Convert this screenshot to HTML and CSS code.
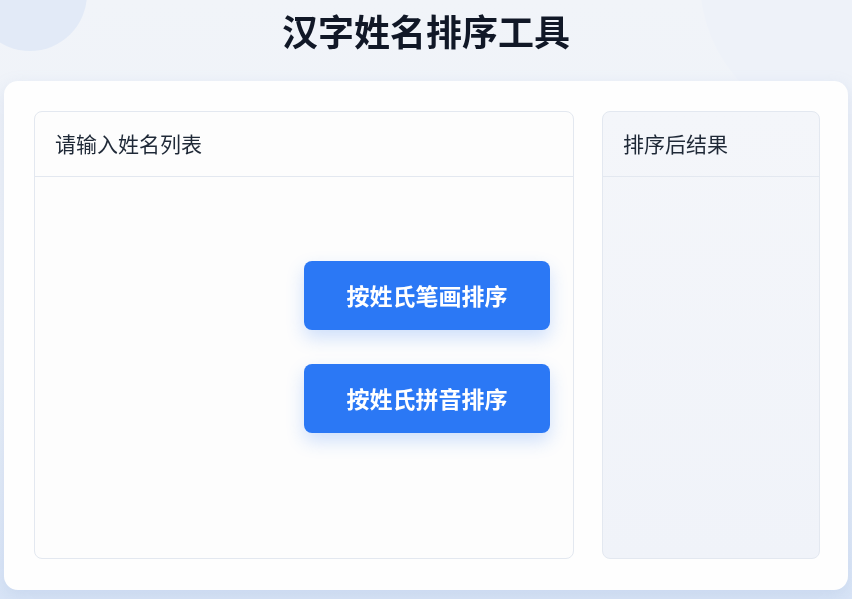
FILE: index.html
```html
<!DOCTYPE html>
<html lang="zh-CN">
<head>
  <meta charset="UTF-8" />
  <meta name="viewport" content="width=device-width, initial-scale=1" />
  <title>汉字姓名排序工具</title>
  <link rel="stylesheet" href="styles.css">
</head>
<body>
  <div class="backdrop">
    <div class="blob blob-left"></div>
    <div class="blob blob-right"></div>
  </div>

  <h1 class="title">汉字姓名排序工具</h1>

  <div class="card">
    <div class="panel panel-input">
      <div class="panel-head">请输入姓名列表</div>
      <div class="panel-body">
        <div class="actions">
          <button class="btn">按姓氏笔画排序</button>
          <button class="btn">按姓氏拼音排序</button>
        </div>
      </div>
    </div>

    <div class="panel panel-result">
      <div class="panel-head">排序后结果</div>
      <div class="panel-body"></div>
    </div>
  </div>
</body>
</html>
```

FILE: styles.css
```css
* {
  box-sizing: border-box;
}

html, body {
  height: 100%;
  overflow: hidden;
}

body {
  margin: 0;
  font-family: "Noto Sans CJK SC", "Noto Sans", sans-serif;
  background: linear-gradient(180deg, #f1f4f9 0%, #edf2f9 60%, #d9e5f7 100%);
  display: flex;
  flex-direction: column;
  align-items: center;
  padding: 0 4px;
}

/* decorative circles behind everything */
.backdrop {
  position: fixed;
  inset: 0;
  overflow: hidden;
  pointer-events: none;
}

.blob {
  position: absolute;
  border-radius: 50%;
}

.blob-left {
  width: 114px;
  height: 114px;
  left: -27px;
  top: -63px;
  background: #e2eaf7;
}

.blob-right {
  width: 300px;
  height: 300px;
  left: 700px;
  top: -170px;
  background: #eef2f9;
}

.title {
  position: relative;
  margin: 7px 0 0;
  height: 74px;
  font-size: 36px;
  font-weight: 700;
  line-height: 46px;
  color: #111827;
}

.card {
  position: relative;
  width: 100%;
  height: 509px;
  background: #fefefe;
  border-radius: 14px;
  box-shadow: 0 6px 18px rgba(120, 150, 200, 0.18);
  padding: 30px 28px 31px 30px;
  display: flex;
  gap: 28px;
}

.panel {
  border: 1px solid #e3e8f0;
  border-radius: 8px;
  display: flex;
  flex-direction: column;
  overflow: hidden;
}

.panel-input {
  width: 540px;
  background: #fdfdfd;
}

.panel-result {
  flex: 1;
  background: linear-gradient(180deg, #f4f6fa 0%, #f0f3f9 100%);
}

.panel-head {
  height: 65px;
  padding: 0 20px 3px;
  display: flex;
  align-items: center;
  font-size: 21px;
  color: #1f2937;
  border-bottom: 1px solid #e3e8f0;
}

.panel-body {
  flex: 1;
}

.actions {
  display: flex;
  flex-direction: column;
  align-items: flex-end;
  gap: 34px;
  padding: 84px 23px 0 0;
}

.btn {
  width: 246px;
  height: 69px;
  padding-bottom: 3px;
  border: none;
  border-radius: 8px;
  background: #2b78f5;
  color: #ffffff;
  font-family: inherit;
  font-size: 23px;
  font-weight: 700;
  cursor: pointer;
  box-shadow: 0 8px 18px rgba(43, 120, 245, 0.22);
}

.btn:hover {
  background: #1f6be8;
}
```
